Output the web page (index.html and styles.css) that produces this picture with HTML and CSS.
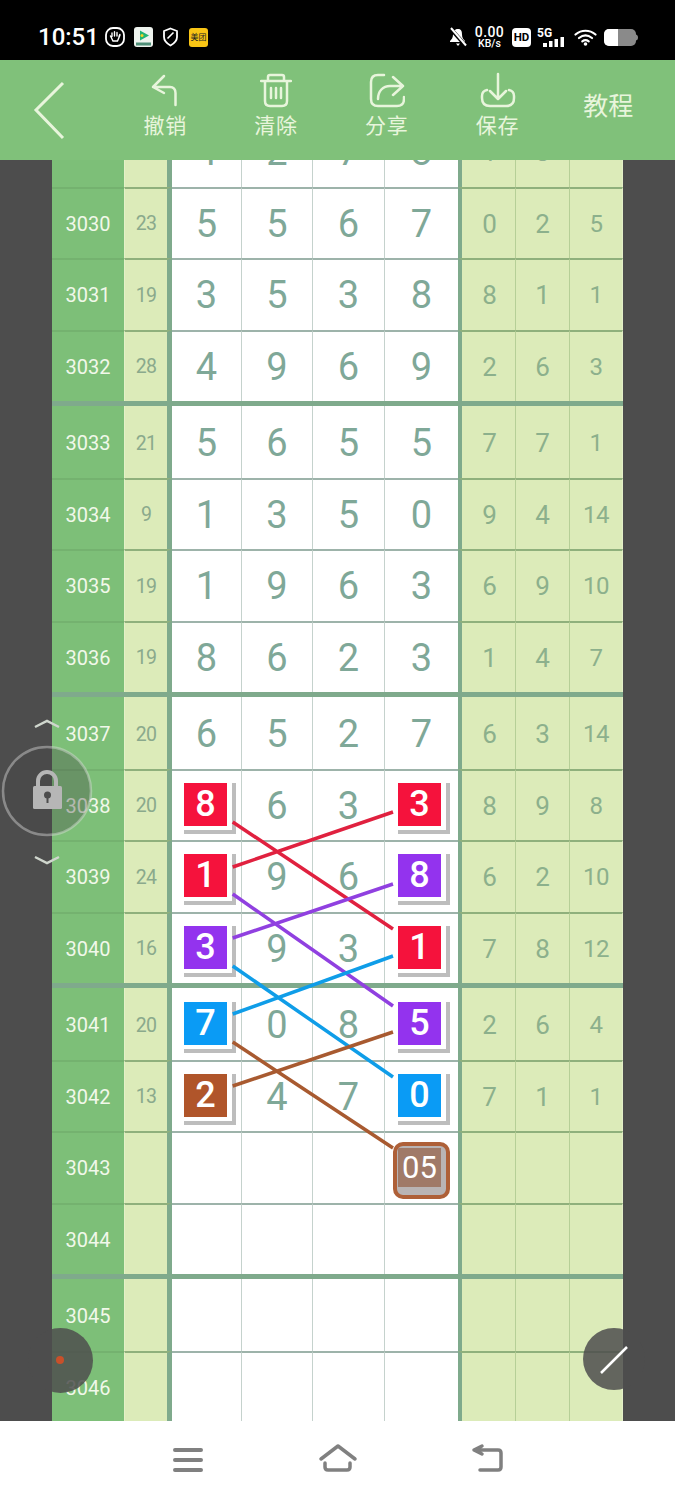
FILE: index.html
```html
<!DOCTYPE html>
<html lang="zh">
<head>
  <meta charset="UTF-8" />
  <meta name="viewport" content="width=device-width, initial-scale=1.0" />
  <title>走势图</title>
  <link rel="stylesheet" href="styles.css">
</head>
<body>
  <div class="status">
    <span class="time">10:51</span>
    <svg class="st-icon" width="20" height="20" viewBox="0 0 20 20"><rect x="1" y="1" width="18" height="18" rx="7" fill="none" stroke="#fff" stroke-width="1.8"/><path d="M5.5 9l2.5 5h4.500l2.500-6M7 9.500V6M9.500 9V4.800M12 9V5.500M14 9.500l.8-2" fill="none" stroke="#fff" stroke-width="1.400" stroke-linecap="round"/></svg>
    <svg class="st-icon" width="19" height="20" viewBox="0 0 19 20"><rect width="19" height="20" rx="3" fill="#eef3ee"/><path d="M6 3.500l9 5-9 5z" fill="#22b573"/><circle cx="8" cy="8.500" r="1.500" fill="#f5d327"/><rect x="2" y="15.500" width="15" height="3" fill="#4f8f78"/></svg>
    <svg class="st-icon" width="17" height="20" viewBox="0 0 17 20"><path d="M8.500 1.500l6.500 2.500v6c0 4-3 6.500-6.500 8.500C5 16.500 2 14 2 10V4z" fill="none" stroke="#fff" stroke-width="1.800"/><path d="M11.500 5.500L5.500 11.500" stroke="#fff" stroke-width="1.600"/></svg>
    <span class="meituan">美团</span>

    <div class="st-right">
      <svg width="18" height="20" viewBox="0 0 18 20"><path d="M9 2c-3.500 0-5 2.500-5 5.500 0 3.500-1.500 5-3 6.500v1h15v-1c-1.500-1.500-3-3-3-6.500C13 4.500 12.500 2 9 2zM7 16.500h4L9 19z" fill="#fff"/><path d="M1.500 1.500l15 17" stroke="#000" stroke-width="4"/><path d="M2 1l15 17.500" stroke="#fff" stroke-width="2"/></svg>
      <div class="speed"><span>0.00</span><small>KB/s</small></div>
      <span class="hd">HD</span>
      <div class="net">
        <span class="net-label">5G</span>
        <svg width="22" height="10" viewBox="0 0 22 10"><path d="M0 6h4v4H0zM6 4h3.500v6H6zM11.500 2H15v8h-3.500zM17.500 0H21v10h-3.500z" fill="#fff"/></svg>
      </div>
      <svg width="23" height="18" viewBox="0 0 23 18"><path d="M1.500 6.500c6-5 14-5 20 0M5 10c4-3.200 9-3.200 13 0M8.300 13.300c2-1.500 4.400-1.500 6.400 0" fill="none" stroke="#fff" stroke-width="2.200" stroke-linecap="round"/><circle cx="11.500" cy="16" r="1.800" fill="#fff"/></svg>
      <svg width="34" height="17" viewBox="0 0 34 17"><rect width="32" height="17" rx="5" fill="#8a8a8a"/><path d="M5 0h9v17H5a5 5 0 0 1-5-5V5a5 5 0 0 1 5-5z" fill="#fff"/><path d="M32 5.500c1.500.5 2 1.500 2 3s-.5 2.500-2 3z" fill="#8a8a8a"/></svg>
    </div>
  </div>

  <div class="toolbar">
    <div class="back">
      <svg width="36" height="62" viewBox="0 0 36 62"><path d="M30 3L3 30l27 28" fill="none" stroke="#e8f5dc" stroke-width="3"/></svg>
    </div>
    <div class="tool">
      <svg width="32" height="36" viewBox="0 0 32 36"><path d="M15 4L4 15l11 6M4 15h17c3.500 0 5.500 2.500 5.500 6v12" fill="none" stroke="#e8f5dc" stroke-width="2.500" stroke-linecap="round" stroke-linejoin="round"/></svg>
      <span>撤销</span>
    </div>
    <div class="tool">
      <svg width="32" height="36" viewBox="0 0 32 36"><path d="M1 9h30M8 9V5q0-2 2-2h12q2 0 2 2v4M5 9v20q0 5 5 5h12q5 0 5-5V9M11 16v10M16 16v10M21 16v10" fill="none" stroke="#e8f5dc" stroke-width="2.500" stroke-linecap="round"/></svg>
      <span>清除</span>
    </div>
    <div class="tool">
      <svg width="36" height="36" viewBox="0 0 36 36"><path d="M15 3H9Q2 3 2 10v17q0 7 7 7h19q7 0 7-7v-2M9 27c0-8 5-13 12-13h13M24 5l10 9-10 9" fill="none" stroke="#e8f5dc" stroke-width="2.500" stroke-linecap="round" stroke-linejoin="round"/></svg>
      <span>分享</span>
    </div>
    <div class="tool">
      <svg width="36" height="36" viewBox="0 0 36 36"><path d="M18 2v24M10 19l8 8 8-8M7 18q-5 1-5 6v2q0 8 8 8h16q8 0 8-8v-2q0-5-5-6" fill="none" stroke="#e8f5dc" stroke-width="2.500" stroke-linecap="round" stroke-linejoin="round"/></svg>
      <span>保存</span>
    </div>
    <div class="tool tool-text"><span>教程</span></div>
  </div>

  <div class="board">
    <div class="sheet">
      <div class="row"><div class="num"></div><div class="sum"></div><div class="d">4</div><div class="d">2</div><div class="d">7</div><div class="d">8</div><div class="r">1</div><div class="r">8</div><div class="r r3">1</div></div>
      <div class="row"><div class="num">3030</div><div class="sum">23</div><div class="d">5</div><div class="d">5</div><div class="d">6</div><div class="d">7</div><div class="r">0</div><div class="r">2</div><div class="r r3">5</div></div>
      <div class="row"><div class="num">3031</div><div class="sum">19</div><div class="d">3</div><div class="d">5</div><div class="d">3</div><div class="d">8</div><div class="r">8</div><div class="r">1</div><div class="r r3">1</div></div>
      <div class="row"><div class="num">3032</div><div class="sum">28</div><div class="d">4</div><div class="d">9</div><div class="d">6</div><div class="d">9</div><div class="r">2</div><div class="r">6</div><div class="r r3">3</div></div>

      <div class="row first"><div class="num">3033</div><div class="sum">21</div><div class="d">5</div><div class="d">6</div><div class="d">5</div><div class="d">5</div><div class="r">7</div><div class="r">7</div><div class="r r3">1</div></div>
      <div class="row"><div class="num">3034</div><div class="sum">9</div><div class="d">1</div><div class="d">3</div><div class="d">5</div><div class="d">0</div><div class="r">9</div><div class="r">4</div><div class="r r3">14</div></div>
      <div class="row"><div class="num">3035</div><div class="sum">19</div><div class="d">1</div><div class="d">9</div><div class="d">6</div><div class="d">3</div><div class="r">6</div><div class="r">9</div><div class="r r3">10</div></div>
      <div class="row"><div class="num">3036</div><div class="sum">19</div><div class="d">8</div><div class="d">6</div><div class="d">2</div><div class="d">3</div><div class="r">1</div><div class="r">4</div><div class="r r3">7</div></div>

      <div class="row first"><div class="num">3037</div><div class="sum">20</div><div class="d">6</div><div class="d">5</div><div class="d">2</div><div class="d">7</div><div class="r">6</div><div class="r">3</div><div class="r r3">14</div></div>
      <div class="row"><div class="num">3038</div><div class="sum">20</div><div class="d pick"><span class="tile"><span class="face red">8</span></span></div><div class="d">6</div><div class="d">3</div><div class="d pick end"><span class="tile"><span class="face red">3</span></span></div><div class="r">8</div><div class="r">9</div><div class="r r3">8</div></div>
      <div class="row"><div class="num">3039</div><div class="sum">24</div><div class="d pick"><span class="tile"><span class="face red">1</span></span></div><div class="d">9</div><div class="d">6</div><div class="d pick end"><span class="tile"><span class="face purple">8</span></span></div><div class="r">6</div><div class="r">2</div><div class="r r3">10</div></div>
      <div class="row"><div class="num">3040</div><div class="sum">16</div><div class="d pick"><span class="tile"><span class="face purple">3</span></span></div><div class="d">9</div><div class="d">3</div><div class="d pick end"><span class="tile"><span class="face red">1</span></span></div><div class="r">7</div><div class="r">8</div><div class="r r3">12</div></div>

      <div class="row first"><div class="num">3041</div><div class="sum">20</div><div class="d pick"><span class="tile"><span class="face blue">7</span></span></div><div class="d">0</div><div class="d">8</div><div class="d pick end"><span class="tile"><span class="face purple">5</span></span></div><div class="r">2</div><div class="r">6</div><div class="r r3">4</div></div>
      <div class="row"><div class="num">3042</div><div class="sum">13</div><div class="d pick"><span class="tile"><span class="face brown">2</span></span></div><div class="d">4</div><div class="d">7</div><div class="d pick end"><span class="tile"><span class="face blue">0</span></span></div><div class="r">7</div><div class="r">1</div><div class="r r3">1</div></div>
      <div class="row"><div class="num">3043</div><div class="sum"></div><div class="d"></div><div class="d"></div><div class="d"></div><div class="d active"><span class="sel"><span class="sel-face">05</span></span></div><div class="r"></div><div class="r"></div><div class="r r3"></div></div>
      <div class="row"><div class="num">3044</div><div class="sum"></div><div class="d"></div><div class="d"></div><div class="d"></div><div class="d"></div><div class="r"></div><div class="r"></div><div class="r r3"></div></div>

      <div class="row first"><div class="num">3045</div><div class="sum"></div><div class="d"></div><div class="d"></div><div class="d"></div><div class="d"></div><div class="r"></div><div class="r"></div><div class="r r3"></div></div>
      <div class="row"><div class="num">3046</div><div class="sum"></div><div class="d"></div><div class="d"></div><div class="d"></div><div class="d"></div><div class="r"></div><div class="r"></div><div class="r r3"></div></div>
    </div>

    <svg class="lines" width="675" height="1261" viewBox="0 160 675 1261">
      <g fill="none" stroke-width="3.500">
        <path d="M232.700 822L393 929M232.700 867L393 812" stroke="#e0213f"/>
        <path d="M232.700 894L393 1006M232.700 938L393 884" stroke="#9040e0"/>
        <path d="M232.700 966L393 1077M232.700 1014L393 956" stroke="#0f9de8"/>
        <path d="M232.700 1042L393 1148M232.700 1086L393 1032" stroke="#a85a30"/>
      </g>
    </svg>

    <svg class="lock" width="100" height="160" viewBox="0 715 100 160">
      <path d="M35 727l12-6 12 6M35 857l12 6 12-6" fill="none" stroke="#cfd6cd" stroke-width="2.500"/>
      <circle cx="47" cy="791" r="44" fill="rgba(70,70,70,.35)" stroke="rgba(225,225,225,.42)" stroke-width="2.500"/>
      <path d="M38 787v-6a9 9 0 0 1 18 0v6" fill="none" stroke="#b6b6b6" stroke-width="4"/>
      <rect x="33" y="786" width="29" height="23" rx="1.500" fill="#b6b6b6"/>
      <circle cx="47.500" cy="795" r="3.500" fill="#4d4d4d"/>
      <path d="M46.500 796h2v7h-2z" fill="#4d4d4d"/>
    </svg>

    <div class="fab fab-left"><span class="dot"></span></div>
    <div class="fab fab-right"></div>
    <svg class="pen" width="30" height="30" viewBox="0 0 30 30"><path d="M2 28L28 2" stroke="#fff" stroke-width="2.500"/></svg>
  </div>

  <div class="nav">
    <svg width="40" height="40" viewBox="0 0 40 40"><path d="M7 10h26M7 20h26M7 30h26" stroke="#808080" stroke-width="4" stroke-linecap="round"/></svg>
    <svg width="40" height="40" viewBox="0 0 40 40"><path d="M3 19L20 6l17 13M7 23v4q0 3 3 3h19q3 0 3-3v-4" fill="none" stroke="#808080" stroke-width="3.500" stroke-linecap="round" stroke-linejoin="round"/></svg>
    <svg width="40" height="40" viewBox="0 0 40 40"><path d="M14 6l-8 4 8 4M6 10h24q3 0 3 3v14q0 3-3 3H12" fill="none" stroke="#808080" stroke-width="3.500" stroke-linecap="round" stroke-linejoin="round"/></svg>
  </div>
</body>
</html>
```

FILE: styles.css
```css
* {
  box-sizing: border-box;
}
body {
  margin: 0;
  width: 675px;
  height: 1500px;
  overflow: hidden;
  background: #fff;
  font-family: Roboto, "Noto Sans CJK SC", sans-serif;
}

/* phone status bar */
.status {
  height: 60px;
  background: #000;
  color: #fff;
  display: flex;
  align-items: center;
  padding: 14px 37px 0 38px;
}
.time {
  font-size: 24px;
  font-weight: 500;
  width: 67px;
}
.st-icon {
  margin-right: 9px;
}
.meituan {
  width: 19px;
  height: 19px;
  border-radius: 3px;
  background: #f9c515;
  color: #222;
  font-size: 8px;
  line-height: 19px;
  text-align: center;
  white-space: nowrap;
  overflow: hidden;
  margin-left: 1px;
}
.st-right {
  margin-left: auto;
  display: flex;
  align-items: center;
  gap: 7px;
}
.speed {
  width: 31px;
  display: flex;
  flex-direction: column;
  align-items: center;
  line-height: 1;
  font-weight: 500;
}
.speed span {
  font-size: 14px;
  letter-spacing: .4px;
}
.speed small {
  font-size: 10.500px;
}
.hd {
  width: 19px;
  height: 19px;
  border-radius: 4px;
  background: #fff;
  color: #000;
  font-size: 11.500px;
  font-weight: 700;
  line-height: 19px;
  text-align: center;
}
.net {
  width: 28px;
  height: 20px;
  margin: 0 2px 0 -1px;
  position: relative;
}
.net-label {
  font-size: 12px;
  font-weight: 700;
  line-height: 12px;
  display: block;
}
.net svg {
  position: absolute;
  right: 0;
  bottom: 0;
}

/* green toolbar */
.toolbar {
  height: 100px;
  background: #80c17a;
  color: #e8f5dc;
  display: grid;
  grid-template-columns: 110px repeat(5, 110.750px);
}
.back {
  padding: 20px 0 0 33px;
}
.tool {
  display: flex;
  flex-direction: column;
  align-items: center;
  padding-top: 12px;
}
.tool svg {
  display: block;
}
.tool span {
  font-size: 21px;
  line-height: 30px;
  margin-top: 3px;
  letter-spacing: 1px;
}
.tool-text {
  justify-content: center;
  padding: 0 0 7px;
}
.tool-text span {
  font-size: 25px;
  letter-spacing: 0;
  margin-top: 0;
}

/* chart */
.board {
  position: relative;
  height: 1261px;
  overflow: hidden;
  background: #4d4d4d;
  padding: 0 52px;
}
.sheet {
  margin-top: -45px;
  width: 571px;
}
.row {
  display: grid;
  grid-template-columns: 72px 48px 70px 71px 72px 73px 58px 54px 53px;
  height: 71.500px;
}
.row.first {
  height: 76.500px;
  border-top: 5px solid #7faa8c;
}
.row > div {
  display: flex;
  align-items: center;
  justify-content: center;
  padding-top: 1px;
}
.row.first > div {
  border-top: 0;
  padding-top: 3px;
}
.num {
  background: #7dbf78;
  color: #f1f8ea;
  font-size: 20px;
  border-top: 2px solid #74b26f;
}
.sum {
  background: #dcebb9;
  color: #8aa98c;
  font-size: 19.500px;
  letter-spacing: -.8px;
  border-left: 1px solid #e4f0c8;
  border-right: 5px solid #7faa8c;
  border-top: 2px solid #8fb07c;
}
.d {
  background: #fff;
  color: #7fa898;
  font-size: 38px;
  border-right: 1px solid #c5d2cd;
  border-top: 2px solid #9db3aa;
}
.d:nth-child(6) {
  border-right: 0;
}
.r {
  background: #dcebb9;
  color: #8cb08c;
  font-size: 26px;
  border-right: 1px solid #b6cf97;
  border-top: 2px solid #8fb07c;
}
.r:nth-child(7) {
  border-left: 4px solid #7faa8c;
  padding-left: 2px;
}
.r3 {
  font-size: 24px;
  letter-spacing: -.5px;
  border-right: 1px solid #e4f0c8;
}
.row > .pick {
  align-items: flex-start;
  justify-content: flex-start;
  padding: 12px 0 0 12px;
}
.row.first > .pick {
  padding-top: 14px;
}
.row > .pick.end {
  padding-left: 13px;
}
.tile {
  display: block;
  width: 52px;
  height: 51px;
  border-right: 4px solid #bdbdbd;
  border-bottom: 4px solid #bdbdbd;
}
.face {
  display: block;
  width: 43px;
  height: 43px;
  color: #fff;
  font-size: 36px;
  font-weight: 500;
  line-height: 43px;
  text-align: center;
}
.red {
  background: #f5123c;
}
.purple {
  background: #9333ee;
}
.blue {
  background: #0a9bf5;
}
.brown {
  background: #b0552a;
}
.row > .active {
  align-items: flex-start;
  justify-content: flex-start;
  padding: 9px 0 0 8px;
}
.sel {
  display: block;
  width: 57px;
  height: 57px;
  border: 4px solid #ae6038;
  border-radius: 10px;
  background: #b9b4b4;
  overflow: hidden;
}
.sel-face {
  display: block;
  margin: 2px 0 0 1px;
  width: 43px;
  height: 39px;
  background: #a07a68;
  color: #fff;
  font-size: 31px;
  line-height: 39px;
  text-align: center;
}

/* things floating over the chart */
.lines,
.lock,
.pen {
  position: absolute;
  pointer-events: none;
}
.lines {
  left: 0;
  top: 0;
}
.lock {
  left: 0;
  top: 555px;
}
.fab {
  position: absolute;
  border-radius: 50%;
  background: rgba(77, 77, 77, .85);
}
.fab-left {
  left: 28px;
  top: 1168px;
  width: 65px;
  height: 65px;
}
.dot {
  position: absolute;
  left: 28px;
  top: 28px;
  width: 8px;
  height: 8px;
  border-radius: 50%;
  background: #c8502a;
}
.fab-right {
  left: 583px;
  top: 1168px;
  width: 62px;
  height: 62px;
}
.pen {
  left: 599px;
  top: 1185px;
}

/* phone navigation bar */
.nav {
  height: 79px;
  background: #fff;
  display: flex;
  justify-content: center;
  align-items: flex-start;
  gap: 110px;
  padding-top: 19px;
}
```
